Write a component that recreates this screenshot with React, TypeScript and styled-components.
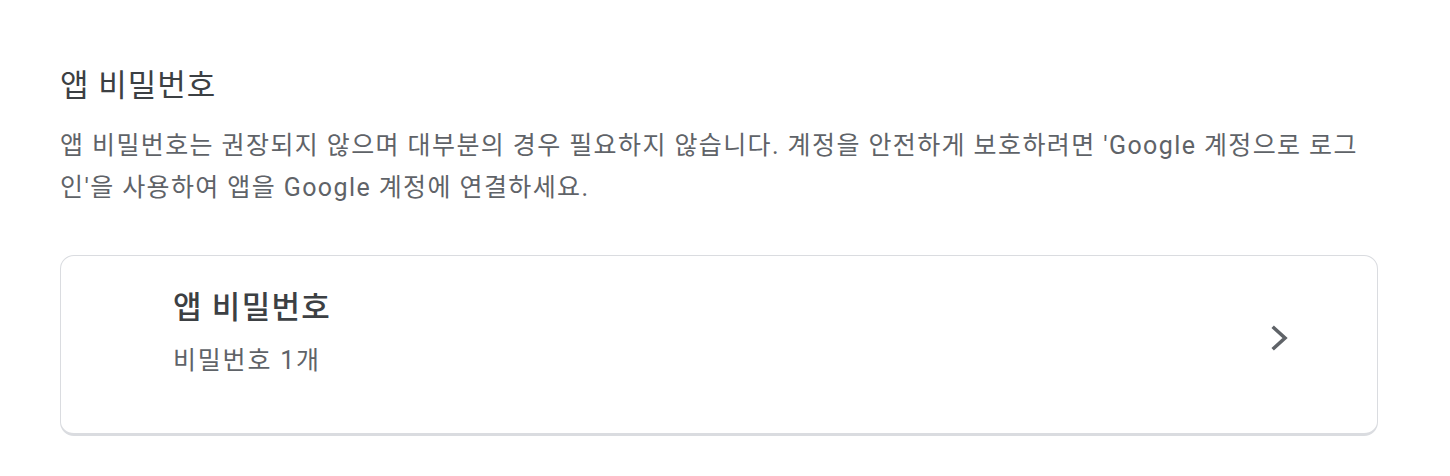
import React from "react";
import styled, { createGlobalStyle } from "styled-components";

const Global = createGlobalStyle`
  body {
    margin: 0;
    background: #ffffff;
    font-family: Roboto, "Noto Sans CJK KR", sans-serif;
  }
`;

const Page = styled.div`
  padding: 64px 72px 40px 60px;
  width: 1318px;
`;

const Heading = styled.h2`
  margin: 0;
  font-size: 31px;
  font-weight: 400;
  line-height: 44px;
  letter-spacing: 1px;
  color: #3c4043;
`;

const Desc = styled.p`
  margin: 17px 0 0;
  font-size: 25px;
  line-height: 42px;
  letter-spacing: 1.4px;
  color: #5f6368;
`;

const Card = styled.div`
  margin-top: 46px;
  border: 1.5px solid #dadce0;
  border-bottom-width: 3px;
  border-radius: 14px;
  display: flex;
  align-items: center;
  height: 181px;
  box-sizing: border-box;
  padding: 0 84px 14px 112px;
  cursor: pointer;
`;

const CardText = styled.div`
  flex: 1;
  display: flex;
  flex-direction: column;
  gap: 16px;
  margin-bottom: 12px;
`;

const CardTitle = styled.div`
  font-size: 31px;
  font-weight: 500;
  line-height: 42px;
  letter-spacing: 1.3px;
  color: #3c4043;
`;

const CardSub = styled.div`
  font-size: 25px;
  line-height: 32px;
  letter-spacing: 1.8px;
  color: #5f6368;
`;

const Chevron = () => (
  <svg width="24" height="30" viewBox="0 0 24 30" fill="none">
    <polyline
      points="5,5 16,15 5,25"
      stroke="#5f6368"
      strokeWidth="3.6"
      strokeLinecap="square"
      strokeLinejoin="miter"
    />
  </svg>
);

export default function App() {
  return (
    <Page>
      <Global />
      <Heading>앱 비밀번호</Heading>
      <Desc>
        앱 비밀번호는 권장되지 않으며 대부분의 경우 필요하지 않습니다. 계정을
        안전하게 보호하려면 'Google 계정으로 로그인'을 사용하여 앱을 Google
        계정에 연결하세요.
      </Desc>
      <Card>
        <CardText>
          <CardTitle>앱 비밀번호</CardTitle>
          <CardSub>비밀번호 1개</CardSub>
        </CardText>
        <Chevron />
      </Card>
    </Page>
  );
}
